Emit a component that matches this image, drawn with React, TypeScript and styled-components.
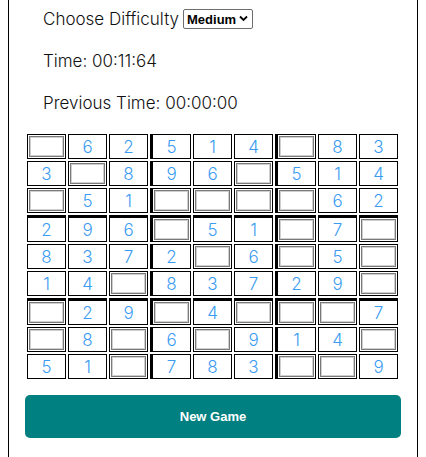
import React from "react";
import styled, { createGlobalStyle } from "styled-components";

const Global = createGlobalStyle`
  html, body { margin: 0; padding: 0; background: #fff; }
  body { margin: 0 8px; overflow: hidden; }
`;

const Page = styled.div`
  box-sizing: border-box;
  min-height: 480px;
  border: 1px solid #000;
  border-top: none;
  padding: 7px 16px 0;
  font-family: Inter, "Noto Sans", sans-serif;
`;

const Info = styled.div`
  display: flex;
  flex-direction: column;
  gap: 18px;
  padding-left: 18px;
  margin-bottom: 17px;
`;

const Line = styled.div`
  display: flex;
  align-items: center;
  height: 24px;
  font-size: 17px;
  font-weight: 300;
  color: #111;
  white-space: pre;
`;

const SelectWrap = styled.span`
  position: relative;
  display: inline-flex;
  margin-left: 4px;
`;

const Select = styled.select`
  appearance: none;
  -webkit-appearance: none;
  box-sizing: border-box;
  width: 70px;
  height: 20px;
  padding: 0 0 0 3px;
  border: 1px solid #6e6e6e;
  border-radius: 2px;
  background: #fff;
  color: #000;
  font: bold 13px "Liberation Sans", Arial, sans-serif;
`;

const Chevron = styled.svg`
  position: absolute;
  right: 5px;
  top: 6px;
  pointer-events: none;
`;

const Board = styled.div`
  display: grid;
  grid-template-columns: 39px 39px 39px 41px 39px 39px 41px 39px 39px;
  gap: 2px;
  padding: 2px;
  width: 376px;
  box-sizing: border-box;
`;

const Cell = styled.div<{ $thickLeft: boolean; $thickTop: boolean }>`
  box-sizing: border-box;
  height: ${(p) => (p.$thickTop ? 27 : 25)}px;
  border: 1px solid #000;
  border-left-width: ${(p) => (p.$thickLeft ? 3 : 1)}px;
  border-top-width: ${(p) => (p.$thickTop ? 3 : 1)}px;
  padding: 1px;
  display: flex;
  align-items: center;
  justify-content: center;
  font-family: Inter, sans-serif;
  font-weight: 300;
  font-size: 17px;
  color: #3a9bf2;
`;

const CellInput = styled.input`
  box-sizing: border-box;
  width: 100%;
  height: 100%;
  margin: 0;
  padding: 0;
  border: 1px solid #7a7a7a;
  box-shadow: inset 0 0 0 1px #cfcfcf;
  background: #fff;
`;

const Button = styled.button`
  display: block;
  width: 376px;
  height: 43px;
  margin-top: 14px;
  border: none;
  border-radius: 5px;
  background: #008080;
  color: #fff;
  font: bold 13px "Liberation Sans", Arial, sans-serif;
`;

const puzzle: number[][] = [
  [0, 6, 2, 5, 1, 4, 0, 8, 3],
  [3, 0, 8, 9, 6, 0, 5, 1, 4],
  [0, 5, 1, 0, 0, 0, 0, 6, 2],
  [2, 9, 6, 0, 5, 1, 0, 7, 0],
  [8, 3, 7, 2, 0, 6, 0, 5, 0],
  [1, 4, 0, 8, 3, 7, 2, 9, 0],
  [0, 2, 9, 0, 4, 0, 0, 0, 7],
  [0, 8, 0, 6, 0, 9, 1, 4, 0],
  [5, 1, 0, 7, 8, 3, 0, 0, 9],
];

export default function App() {
  return (
    <>
      <Global />
      <Page>
        <Info>
          <Line>
            Choose Difficulty
            <SelectWrap>
              <Select defaultValue="Medium">
                <option>Easy</option>
                <option>Medium</option>
                <option>Hard</option>
              </Select>
              <Chevron width="9" height="7" viewBox="0 0 9 7">
                <path d="M1 1.5 L4.5 5 L8 1.5" fill="none" stroke="#000" strokeWidth="1.8" />
              </Chevron>
            </SelectWrap>
          </Line>
          <Line>Time: 00:11:64</Line>
          <Line>Previous Time: 00:00:00</Line>
        </Info>
        <Board>
          {puzzle.map((row, r) =>
            row.map((v, c) => (
              <Cell key={`${r}-${c}`} $thickLeft={c === 3 || c === 6} $thickTop={r === 3 || r === 6}>
                {v ? v : <CellInput type="text" />}
              </Cell>
            ))
          )}
        </Board>
        <Button>New Game</Button>
      </Page>
    </>
  );
}
